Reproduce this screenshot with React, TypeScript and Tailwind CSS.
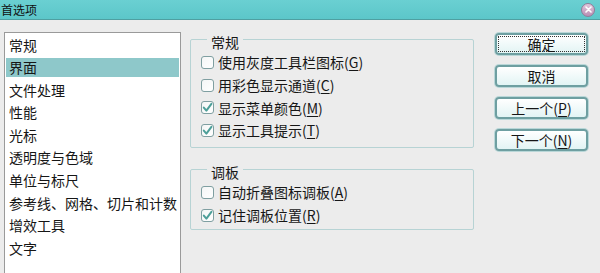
import React from "react";

const font = { fontFamily: '"Noto Sans CJK SC", "Noto Sans", sans-serif' };

function Check({ checked }: { checked?: boolean }) {
  return (
    <span className="flex h-[13px] w-[13px] shrink-0 items-center justify-center rounded-[3px] border border-[#7f9fa1] bg-gradient-to-br from-[#f4f6f6] to-white">
      {checked && (
        <svg width="11" height="11" viewBox="0 0 11 11">
          <path d="M1.8 5.6 L4.4 8.6 L9.4 1.8" fill="none" stroke="#4d9f99" strokeWidth="2" strokeLinecap="round" strokeLinejoin="round" />
        </svg>
      )}
    </span>
  );
}

function Row({ checked, label, k }: { checked?: boolean; label: string; k: string }) {
  return (
    <div className="flex h-[22.7px] items-center gap-[4px]">
      <Check checked={checked} />
      <span className="text-[14px] leading-[16px] text-[#161616]">
        {label}(<span className="underline underline-offset-2">{k}</span>)
      </span>
    </div>
  );
}

function Btn({ children, focus }: { children: React.ReactNode; focus?: boolean }) {
  return (
    <div className="flex h-[22px] w-[93px] items-center justify-center rounded-[4px] border-2 border-[#6e9fa1] bg-gradient-to-b from-white to-[#e2f4f4] p-[1px] shadow-[0_0_0_1px_#b9d7d8]">
      <div className={`flex h-full w-full items-center justify-center text-[14px] leading-[16px] text-[#161616] ${focus ? "border border-dotted border-[#333]" : ""}`}>
        {children}
      </div>
    </div>
  );
}

export default function App() {
  const items = ["常规", "界面", "文件处理", "性能", "光标", "透明度与色域", "单位与标尺", "参考线、网格、切片和计数", "增效工具", "文字"];
  return (
    <div className="flex h-[273px] w-[600px] flex-col overflow-hidden bg-[#ececec]" style={font}>
      <div className="flex h-[20px] shrink-0 items-center justify-between border-b border-[#4f9fa1] bg-gradient-to-b from-[#6ad0d2] to-[#5cc6c9] pl-[1px] pr-[5px]">
        <span className="text-[12px] leading-[14px] text-[#101010]">首选项</span>
        <span className="flex h-[14px] w-[14px] items-center justify-center rounded-full border border-[#8f7d98] bg-gradient-to-b from-[#e2c6dc] to-[#b98fb4]">
          <svg width="7" height="7" viewBox="0 0 7 7">
            <path d="M1 1 L6 6 M6 1 L1 6" stroke="white" strokeWidth="1.6" strokeLinecap="round" />
          </svg>
        </span>
      </div>
      <div className="flex flex-1 items-start">
        <div className="ml-[4px] mt-[12px] h-[260px] w-[177px] shrink-0 border border-[#9a9a9a] bg-white px-[1px] pt-[2px]">
          <div className="flex flex-col gap-[3.6px]">
            {items.map((t, i) => (
              <div key={t} className={`flex h-[19px] items-center pl-[3px] text-[14px] leading-[16px] text-[#161616] ${i === 1 ? "bg-[#8ec8ca]" : ""}`}>
                {t}
              </div>
            ))}
          </div>
        </div>
        <div className="ml-[9px] mt-[9px] flex w-[284px] flex-col gap-[11px]">
          <fieldset className="h-[119px] rounded-[2px] border border-[#b7d3d4] px-[10px]">
            <legend className="ml-[6px] px-[4px] pt-[5px] text-[14px] leading-[16px] text-[#161616]">常规</legend>
            <div className="flex flex-col pt-[1px]">
              <Row label="使用灰度工具栏图标" k="G" />
              <Row label="用彩色显示通道" k="C" />
              <Row checked label="显示菜单颜色" k="M" />
              <Row checked label="显示工具提示" k="T" />
            </div>
          </fieldset>
          <fieldset className="h-[71px] rounded-[2px] border border-[#b7d3d4] px-[10px]">
            <legend className="ml-[6px] px-[4px] pt-[5px] text-[14px] leading-[16px] text-[#161616]">调板</legend>
            <div className="flex flex-col pt-[1px]">
              <Row label="自动折叠图标调板" k="A" />
              <Row checked label="记住调板位置" k="R" />
            </div>
          </fieldset>
        </div>
        <div className="ml-[21px] mt-[13px] flex flex-col gap-[10px]">
          <Btn focus>确定</Btn>
          <Btn>取消</Btn>
          <Btn>
            上一个(<span className="underline underline-offset-2">P</span>)
          </Btn>
          <Btn>
            下一个(<span className="underline underline-offset-2">N</span>)
          </Btn>
        </div>
      </div>
    </div>
  );
}
